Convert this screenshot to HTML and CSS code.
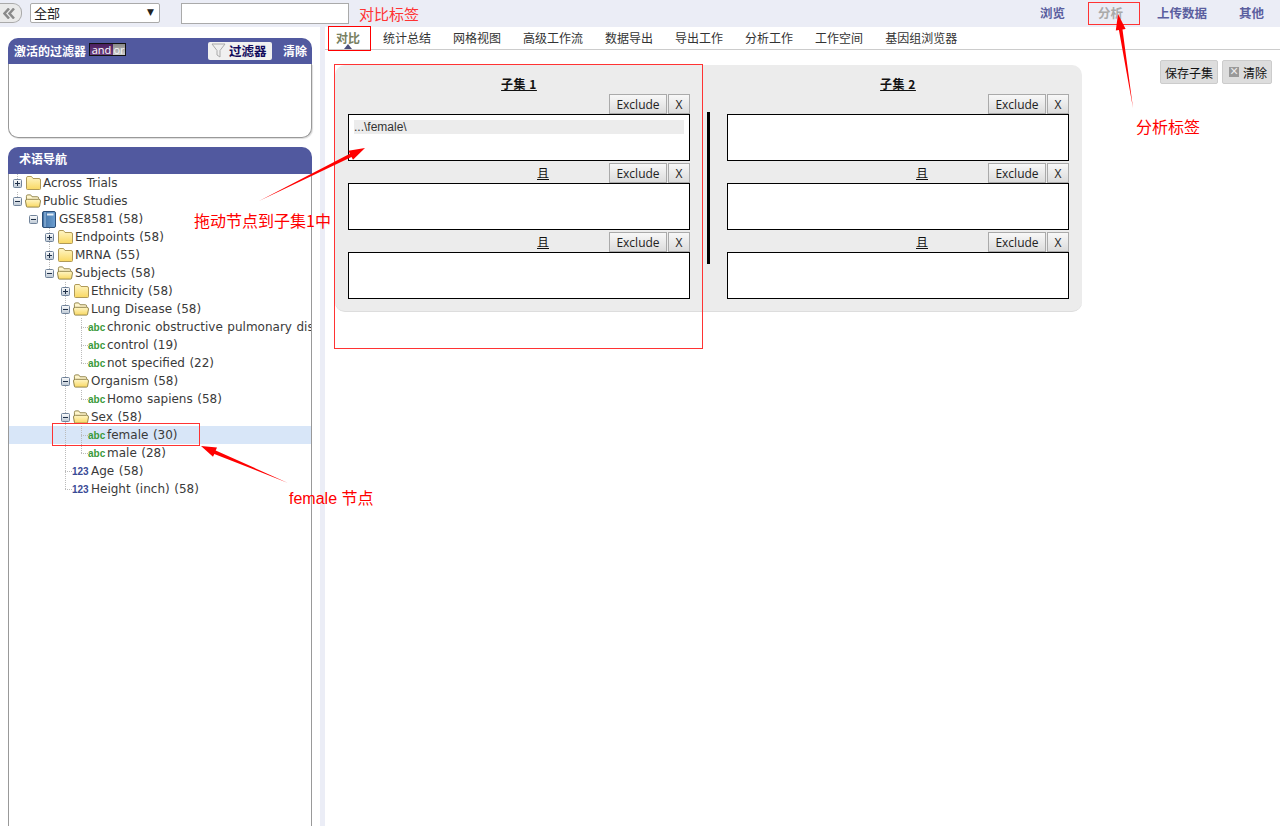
FILE: index.html
```html
<!DOCTYPE html>
<html>
<head>
    <title>Analyze</title>
    <link rel="stylesheet" href="styles.css">
</head>
<body>
    <svg class="defs" width="0" height="0">
        <defs>
            <linearGradient id="folder-fill" x1="0" y1="0" x2="0" y2="1"><stop offset="0" stop-color="#fff6c6"/><stop offset="1" stop-color="#f9d862"/></linearGradient>
            <linearGradient id="exp-fill" x1="0" y1="0" x2="0" y2="1"><stop offset="0" stop-color="#fdfdfd"/><stop offset="1" stop-color="#bcc8d4"/></linearGradient>
            <linearGradient id="book-fill" x1="0" y1="0" x2="1" y2="0"><stop offset="0" stop-color="#3f6fa3"/><stop offset="1" stop-color="#6da0d2"/></linearGradient>
        </defs>
        <symbol id="plus" viewBox="0 0 9 9"><rect x=".5" y=".5" width="8" height="8" rx="1" fill="url(#exp-fill)" stroke="#71839a"/><path d="M2 4.500h5M4.500 2v5" stroke="#1f3048"/></symbol>
        <symbol id="minus" viewBox="0 0 9 9"><rect x=".5" y=".5" width="8" height="8" rx="1" fill="url(#exp-fill)" stroke="#71839a"/><path d="M2 4.500h5" stroke="#1f3048"/></symbol>
        <symbol id="folder" viewBox="0 0 16 14"><path d="M1.500 3V1.800Q1.500 .5 3 .5h3.500L8 2.500h6q1.500 0 1.500 1.500v8.500q0 1-1 1h-12q-1 0-1-1z" fill="url(#folder-fill)" stroke="#b09a58"/></symbol>
        <symbol id="folder-open" viewBox="0 0 17 14"><path d="M1.500 12V2q0-1.500 1.500-1.500h3L7.500 2.500H13q1.500 0 1.500 1.500v1" fill="#fff6cc" stroke="#8f8148"/><path d="M.5 7q0-1.800 2-1.800h12q2 0 2 1.800l-1 5.500q-.2 1-1 1h-12q-1 0-1-1z" fill="url(#folder-fill)" stroke="#8f8148"/></symbol>
        <symbol id="book" viewBox="0 0 14 17"><rect x=".5" y=".5" width="13" height="16" rx="1.500" fill="url(#book-fill)" stroke="#2d4f78"/><path d="M3 1v15" stroke="#a9c8e6"/><path d="M5 3.500h6.500" stroke="#e4eef8" stroke-width="2"/></symbol>
    </svg>

    <div class="topbar">
        <button class="collapse"><svg width="12" height="11" viewBox="0 0 12 11"><path d="M6 .5 1.500 5.500 6 10.500M11 .5 6.500 5.500 11 10.500" fill="none" stroke="#8a8a8a" stroke-width="2.500"/></svg></button>
        <div class="select"><span>全部</span><span class="select-arrow">▼</span></div>
        <input class="search" type="text">
        <div class="topnav">
            <a>浏览</a>
            <a class="current">分析</a>
            <a>上传数据</a>
            <a>其他</a>
        </div>
    </div>

    <div class="page">
        <div class="sidebar">
            <div class="panel filters">
                <div class="panel-head">
                    <span>激活的过滤器</span>
                    <span class="toggle"><span class="toggle-and">and</span><span class="toggle-or">or</span></span>
                    <button class="filter-btn">
                        <svg width="15" height="15" viewBox="0 0 15 15"><path d="M1 1h13L9 7.500V14L6 12V7.500z" fill="#eee" stroke="#aaa"/></svg>
                        过滤器
                    </button>
                    <span class="clear-link">清除</span>
                </div>
                <div class="panel-body"></div>
            </div>

            <div class="panel terms">
                <div class="panel-head"><span class="terms-title">术语导航</span></div>
                <div class="panel-body tree">
                    <div class="row">
                        <span class="cell v-half-top"><svg class="exp"><use href="#plus"/></svg></span>
                        <svg class="ic-folder"><use href="#folder"/></svg><span class="label">Across Trials</span>
                    </div>
                    <div class="row">
                        <span class="cell v-half-top"><svg class="exp"><use href="#minus"/></svg></span>
                        <svg class="ic-folder"><use href="#folder-open"/></svg><span class="label">Public Studies</span>
                    </div>
                    <div class="row">
                        <span class="cell"></span>
                        <span class="cell"><svg class="exp"><use href="#minus"/></svg></span>
                        <svg class="ic-book"><use href="#book"/></svg><span class="label">GSE8581 (58)</span>
                    </div>
                    <div class="row">
                        <span class="cell"></span><span class="cell"></span>
                        <span class="cell v-line"><svg class="exp"><use href="#plus"/></svg></span>
                        <svg class="ic-folder"><use href="#folder"/></svg><span class="label">Endpoints (58)</span>
                    </div>
                    <div class="row">
                        <span class="cell"></span><span class="cell"></span>
                        <span class="cell v-line"><svg class="exp"><use href="#plus"/></svg></span>
                        <svg class="ic-folder"><use href="#folder"/></svg><span class="label">MRNA (55)</span>
                    </div>
                    <div class="row">
                        <span class="cell"></span><span class="cell"></span>
                        <span class="cell v-half-top"><svg class="exp"><use href="#minus"/></svg></span>
                        <svg class="ic-folder"><use href="#folder-open"/></svg><span class="label">Subjects (58)</span>
                    </div>
                    <div class="row">
                        <span class="cell"></span><span class="cell"></span><span class="cell"></span>
                        <span class="cell v-line"><svg class="exp"><use href="#plus"/></svg></span>
                        <svg class="ic-folder"><use href="#folder"/></svg><span class="label">Ethnicity (58)</span>
                    </div>
                    <div class="row">
                        <span class="cell"></span><span class="cell"></span><span class="cell"></span>
                        <span class="cell v-line"><svg class="exp"><use href="#minus"/></svg></span>
                        <svg class="ic-folder"><use href="#folder-open"/></svg><span class="label">Lung Disease (58)</span>
                    </div>
                    <div class="row">
                        <span class="cell"></span><span class="cell"></span><span class="cell"></span><span class="cell v-line"></span>
                        <span class="cell v-line h-line"></span>
                        <span class="tag tag-abc">abc</span><span class="label">chronic obstructive pulmonary disease (17)</span>
                    </div>
                    <div class="row">
                        <span class="cell"></span><span class="cell"></span><span class="cell"></span><span class="cell v-line"></span>
                        <span class="cell v-line h-line"></span>
                        <span class="tag tag-abc">abc</span><span class="label">control (19)</span>
                    </div>
                    <div class="row">
                        <span class="cell"></span><span class="cell"></span><span class="cell"></span><span class="cell v-line"></span>
                        <span class="cell v-half-top h-line"></span>
                        <span class="tag tag-abc">abc</span><span class="label">not specified (22)</span>
                    </div>
                    <div class="row">
                        <span class="cell"></span><span class="cell"></span><span class="cell"></span>
                        <span class="cell v-line"><svg class="exp"><use href="#minus"/></svg></span>
                        <svg class="ic-folder"><use href="#folder-open"/></svg><span class="label">Organism (58)</span>
                    </div>
                    <div class="row">
                        <span class="cell"></span><span class="cell"></span><span class="cell"></span><span class="cell v-line"></span>
                        <span class="cell v-half-top h-line"></span>
                        <span class="tag tag-abc">abc</span><span class="label">Homo sapiens (58)</span>
                    </div>
                    <div class="row">
                        <span class="cell"></span><span class="cell"></span><span class="cell"></span>
                        <span class="cell v-line"><svg class="exp"><use href="#minus"/></svg></span>
                        <svg class="ic-folder"><use href="#folder-open"/></svg><span class="label">Sex (58)</span>
                    </div>
                    <div class="row selected">
                        <span class="cell"></span><span class="cell"></span><span class="cell"></span><span class="cell v-line"></span>
                        <span class="cell v-line h-line"></span>
                        <span class="tag tag-abc">abc</span><span class="label">female (30)</span>
                    </div>
                    <div class="row">
                        <span class="cell"></span><span class="cell"></span><span class="cell"></span><span class="cell v-line"></span>
                        <span class="cell v-half-top h-line"></span>
                        <span class="tag tag-abc">abc</span><span class="label">male (28)</span>
                    </div>
                    <div class="row">
                        <span class="cell"></span><span class="cell"></span><span class="cell"></span>
                        <span class="cell v-line h-line"></span>
                        <span class="tag tag-num">123</span><span class="label">Age (58)</span>
                    </div>
                    <div class="row">
                        <span class="cell"></span><span class="cell"></span><span class="cell"></span>
                        <span class="cell v-half-top h-line"></span>
                        <span class="tag tag-num">123</span><span class="label">Height (inch) (58)</span>
                    </div>
                </div>
            </div>
        </div>

        <div class="gutter"></div>

        <div class="main">
            <div class="tabs">
                <a class="tab active">对比</a>
                <a class="tab">统计总结</a>
                <a class="tab">网格视图</a>
                <a class="tab">高级工作流</a>
                <a class="tab">数据导出</a>
                <a class="tab">导出工作</a>
                <a class="tab">分析工作</a>
                <a class="tab">工作空间</a>
                <a class="tab">基因组浏览器</a>
            </div>
            <div class="content">
                <div class="subsets">
                    <div class="subset">
                        <div class="subset-title">子集 1</div>
                        <div class="group">
                            <div class="group-head"><button class="btn">Exclude</button><button class="btn btn-x">X</button></div>
                            <div class="drop"><div class="drop-item">...\female\</div></div>
                        </div>
                        <div class="group">
                            <div class="group-head"><span class="and">且</span><button class="btn">Exclude</button><button class="btn btn-x">X</button></div>
                            <div class="drop"></div>
                        </div>
                        <div class="group">
                            <div class="group-head"><span class="and">且</span><button class="btn">Exclude</button><button class="btn btn-x">X</button></div>
                            <div class="drop"></div>
                        </div>
                    </div>
                    <div class="divider"></div>
                    <div class="subset">
                        <div class="subset-title">子集 2</div>
                        <div class="group">
                            <div class="group-head"><button class="btn">Exclude</button><button class="btn btn-x">X</button></div>
                            <div class="drop"></div>
                        </div>
                        <div class="group">
                            <div class="group-head"><span class="and">且</span><button class="btn">Exclude</button><button class="btn btn-x">X</button></div>
                            <div class="drop"></div>
                        </div>
                        <div class="group">
                            <div class="group-head"><span class="and">且</span><button class="btn">Exclude</button><button class="btn btn-x">X</button></div>
                            <div class="drop"></div>
                        </div>
                    </div>
                </div>
                <div class="actions">
                    <button class="action-btn">保存子集</button>
                    <button class="action-btn"><span class="clear-icon">×</span>清除</button>
                </div>
            </div>
        </div>
    </div>

    <!-- red notes drawn on top of the screenshot -->
    <div class="note-box note-tab"></div>
    <div class="note-box note-nav"></div>
    <div class="note-box note-subset"></div>
    <div class="note-box note-node"></div>
    <span class="note note-tab-text">对比标签</span>
    <span class="note note-nav-text">分析标签</span>
    <span class="note note-drag-text">拖动节点到子集1中</span>
    <span class="note note-node-text">female 节点</span>
    <svg class="arrows" width="1280" height="826" viewBox="0 0 1280 826">
        <polygon points="259,201 349.900,153.700 348.400,150.800 365,148 353,159.800 351.500,156.900"/>
        <polygon points="288,483 215.700,450.500 217,447.600 201,446 213,456.800 214.300,453.900"/>
        <polygon points="1133,108 1122.500,29.500 1125.600,29 1118,14 1115.800,30.600 1118.900,30.100"/>
    </svg>
</body>
</html>
```

FILE: styles.css
```css
* {
    box-sizing: border-box;
}
html, body {
    height: 100%;
}
body {
    margin: 0;
    overflow: hidden;
    display: flex;
    flex-direction: column;
    position: relative;
    background: #fff;
    color: #222;
    font-family: "Noto Sans CJK SC", "Liberation Sans", sans-serif;
    font-size: 12px;
}
.defs {
    position: absolute;
}

/* top bar */
.topbar {
    flex: none;
    height: 27px;
    display: flex;
    align-items: flex-start;
    padding-top: 3px;
    background: #ebedf6;
}
.collapse {
    width: 22px;
    height: 20px;
    display: flex;
    align-items: center;
    padding: 0 0 0 3px;
    margin-right: 8px;
    border: 1px solid #aaa;
    border-left: 0;
    border-radius: 0 9px 9px 0;
    background: #eaeaea;
}
.select {
    width: 130px;
    height: 20px;
    display: flex;
    align-items: center;
    justify-content: space-between;
    padding: 0 5px 2px 3px;
    margin-right: 21px;
    background: #fff;
    border: 1px solid #aaa;
    border-radius: 2px;
    font-size: 13px;
}
.select-arrow {
    font-family: "DejaVu Sans", sans-serif;
    font-size: 9px;
}
.search {
    width: 168px;
    height: 21px;
    padding: 0;
    border: 1px solid #aaa;
    background: #fff;
}
.topnav {
    margin-left: auto;
    display: flex;
    gap: 32px;
    padding: 3px 16px 0 0;
    color: #5b5f9f;
    font-size: 12.5px;
    font-weight: bold;
    line-height: 14px;
}
.topnav .current {
    margin: 0 2px 0 1px;
    color: #aaa;
}

/* layout */
.page {
    flex: 1;
    min-height: 0;
    display: flex;
}
.sidebar {
    flex: none;
    width: 320px;
    padding: 11px 8px 0;
    display: flex;
    flex-direction: column;
    gap: 9px;
}
.gutter {
    flex: none;
    width: 5px;
    background: #ebedf6;
}
.main {
    flex: 1;
    min-width: 0;
}

/* panels */
.panel-head {
    height: 26px;
    display: flex;
    align-items: center;
    padding: 0 5px 2px 6px;
    background: #51599f;
    border-radius: 10px 10px 0 0;
    color: #fff;
    font-weight: bold;
}
.panel-body {
    background: #fff;
    border: 1px solid #999;
    border-top: 0;
}
.filters .panel-body {
    height: 74px;
    border-radius: 0 0 10px 10px;
    box-shadow: 1px 1px 1px #ddd;
}
.toggle {
    display: flex;
    margin: 0 0 1px 3px;
    border: 1px solid #111;
    font-family: "Open Sans", sans-serif;
    font-weight: normal;
    font-size: 11px;
    line-height: 11px;
}
.toggle-and {
    width: 23px;
    text-align: center;
    background: linear-gradient(#4a1f5e, #6d3f80);
}
.toggle-or {
    width: 12px;
    text-align: center;
    background: linear-gradient(#888, #ccc);
    color: #f4f4f4;
}
.filter-btn {
    width: 64px;
    height: 18px;
    display: flex;
    align-items: center;
    gap: 3px;
    padding: 0 0 2px 3px;
    margin: 2px 0 0 auto;
    background: #f0f0f0;
    border: 0;
    border-radius: 2px;
    color: #120a5c;
    font: bold 12.5px "Noto Sans CJK SC", sans-serif;
}
.filter-btn svg {
    flex: none;
    margin-top: 1px;
}
.clear-link {
    margin-left: 11px;
}
.terms {
    flex: 1;
    min-height: 0;
    display: flex;
    flex-direction: column;
}
.terms .panel-head {
    height: 27px;
    flex: none;
    padding-bottom: 4px;
}
.terms-title {
    padding-left: 5px;
}

/* tree */
.tree {
    flex: 1;
    overflow: hidden;
    border-bottom: 0;
}
.row {
    height: 18px;
    display: flex;
    align-items: center;
    white-space: nowrap;
    color: #3a3a3a;
    font-family: "DejaVu Sans", sans-serif;
    font-size: 12px;
    word-spacing: .7px;
}
.row.selected {
    background: #d8e6f8;
}
.cell {
    flex: none;
    width: 16px;
    height: 18px;
    display: flex;
    align-items: center;
    justify-content: center;
}
.v-line {
    background: repeating-linear-gradient(#bbb 0 1px, transparent 1px 2px) 8px 0 / 1px 100% no-repeat;
}
.v-half-top {
    background: repeating-linear-gradient(#bbb 0 1px, transparent 1px 2px) 8px 0 / 1px 9px no-repeat;
}
.v-line.h-line {
    background:
        repeating-linear-gradient(#bbb 0 1px, transparent 1px 2px) 8px 0 / 1px 100% no-repeat,
        repeating-linear-gradient(90deg, #bbb 0 1px, transparent 1px 2px) 8px 9px / 8px 1px no-repeat;
}
.v-half-top.h-line {
    background:
        repeating-linear-gradient(#bbb 0 1px, transparent 1px 2px) 8px 0 / 1px 9px no-repeat,
        repeating-linear-gradient(90deg, #bbb 0 1px, transparent 1px 2px) 8px 9px / 8px 1px no-repeat;
}
.exp {
    width: 9px;
    height: 9px;
    background: #fff;
}
.ic-folder {
    flex: none;
    width: 16px;
    height: 14px;
    margin-right: 2px;
}
.ic-book {
    flex: none;
    width: 14px;
    height: 17px;
    margin: 0 3px 0 1px;
}
.tag {
    flex: none;
    width: 18px;
    margin-left: -1px;
    margin-right: 1px;
    font-family: "Liberation Sans", sans-serif;
    font-size: 10px;
    font-weight: bold;
    line-height: 18px;
    padding-top: 1px;
}
.tag-abc {
    color: #3a9a3a;
}
.tag-num {
    color: #3a4a96;
}

/* tabs */
.tabs {
    height: 23px;
    display: flex;
    border-bottom: 1px solid #ccc;
    line-height: 22px;
}
.tab {
    padding: 0 11px;
    color: #333;
}
.tab.active {
    position: relative;
    margin-right: 1px;
    color: #78805f;
    font-weight: bold;
}
.tab.active::after {
    content: "";
    position: absolute;
    left: 50%;
    bottom: 0;
    margin-left: -4px;
    border: 4px solid transparent;
    border-top: 0;
    border-bottom: 5px solid #4a4f7c;
}

/* subsets */
.content {
    display: flex;
    align-items: flex-start;
    padding: 15px 8px 0 10px;
    justify-content: space-between;
}
.subsets {
    width: 747px;
    display: flex;
    padding: 0 13px 12px;
    background: #ececec;
    border-bottom: 1px solid #ddd;
    border-radius: 10px;
}
.subset {
    width: 342px;
    display: flex;
    flex-direction: column;
    gap: 3px;
}
.subset-title {
    height: 27px;
    padding-top: 11px;
    text-align: center;
    color: #111;
    font-weight: bold;
    letter-spacing: .5px;
    line-height: 16px;
    text-decoration: underline;
}
.divider {
    flex: none;
    width: 3px;
    height: 152px;
    margin: 47px 17px 0;
    background: #000;
}
.group-head {
    height: 19px;
    display: flex;
    align-items: flex-end;
    justify-content: flex-end;
    gap: 1px;
}
.and {
    margin: 0 auto 0 189px;
    align-self: flex-start;
    color: #111;
    text-decoration: underline;
    line-height: 18px;
}
.btn {
    flex: none;
    height: 20px;
    width: 58px;
    padding: 2px 0 0;
    background: linear-gradient(#f8f8f8, #dcdcdc);
    border: 1px solid #aaa;
    color: #222;
    font-family: "Open Sans", sans-serif;
    font-size: 12px;
    line-height: 16px;
}
.btn-x {
    width: 22px;
}
.drop {
    height: 47px;
    padding: 5px;
    background: #fff;
    border: 1px solid #000;
}
.drop-item {
    height: 14px;
    background: #ececec;
    color: #333;
    font-family: "Liberation Sans", sans-serif;
    font-size: 12px;
    line-height: 14px;
}

/* save / clear */
.actions {
    display: flex;
    gap: 4px;
    margin-top: -5px;
}
.action-btn {
    height: 24px;
    display: flex;
    align-items: center;
    gap: 4px;
    padding: 0 4px;
    background: #ddd;
    border: 1px solid #ccc;
    border-radius: 2px;
    color: #111;
    font: 12px "Noto Sans CJK SC", sans-serif;
}
.clear-icon {
    width: 10px;
    height: 10px;
    margin-left: 2px;
    background: #999;
    color: #eee;
    font-family: "Liberation Sans", sans-serif;
    font-size: 14px;
    line-height: 9px;
}

/* annotations */
.note-box {
    position: absolute;
    border: 1px solid #f33;
}
.note-tab {
    left: 328px;
    top: 26px;
    width: 43px;
    height: 25px;
    border-color: #f00;
}
.note-nav {
    left: 1088px;
    top: 2px;
    width: 52px;
    height: 23px;
}
.note-subset {
    left: 334px;
    top: 64px;
    width: 369px;
    height: 285px;
}
.note-node {
    left: 52px;
    top: 423px;
    width: 148px;
    height: 23px;
}
.note {
    position: absolute;
    color: #f00;
    white-space: nowrap;
    line-height: 20px;
}
.note-tab-text {
    left: 359px;
    top: 4px;
    font-size: 15px;
    color: #f33;
}
.note-nav-text {
    left: 1136px;
    top: 116px;
    font-size: 16px;
}
.note-drag-text {
    left: 194px;
    top: 210px;
    font-size: 16px;
}
.note-node-text {
    left: 289px;
    top: 489px;
    font-family: "Liberation Sans", "Noto Sans CJK SC", sans-serif;
    font-size: 16px;
}
.arrows {
    position: absolute;
    left: 0;
    top: 0;
    pointer-events: none;
}
.arrows polygon {
    fill: #f00;
}
```
